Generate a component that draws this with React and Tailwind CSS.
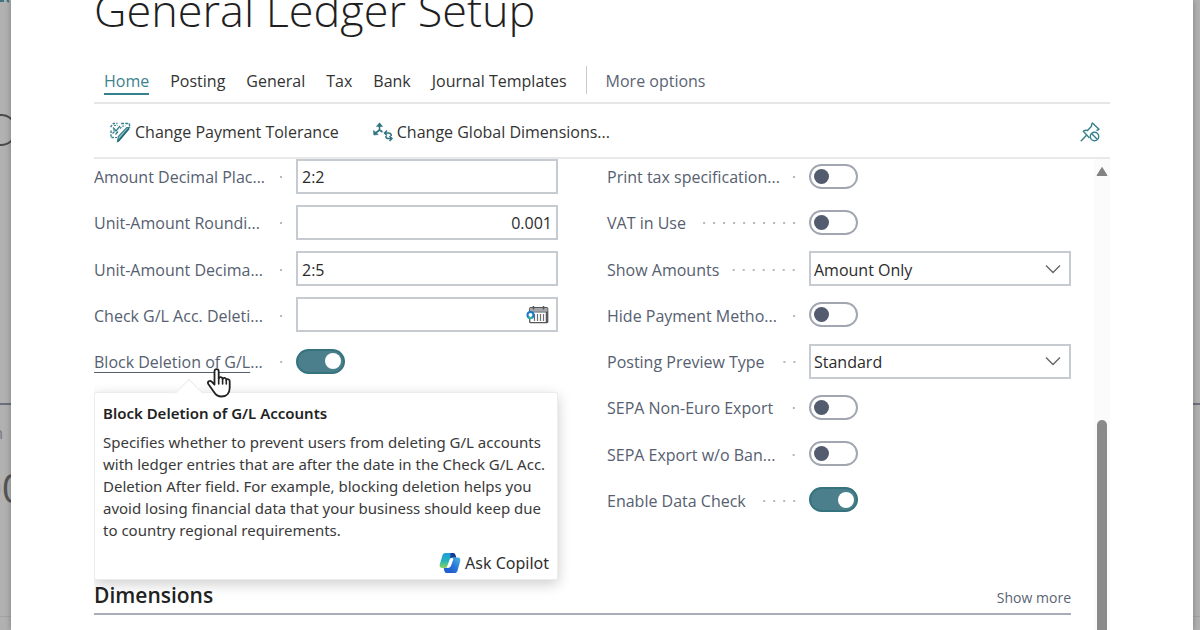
import React, { useState } from "react";

function ToleranceIcon() {
  return (
    <svg width="22" height="22" viewBox="0 0 22 22" fill="none" stroke="#35808c" strokeWidth="1.400" aria-hidden="true">
      <path d="M1.500 6l3-3.500h4M2 9.500v7h3" strokeDasharray="2.500 1.200" />
      <path d="M12 2.500h8.500v3.500" strokeDasharray="3 1.300" />
      <path d="M4 6.500l3 3.500 4-5M6.500 13.500l2.500-3M3.500 12.500l2-2" strokeWidth="1.300" />
      <path d="M5 4.500h3.500M11 7.500l3-2.500h2.500M4 9h2M8 16.500H6" strokeDasharray="2 1" strokeWidth="1.200" />
      <path d="M20.500 6.500l-8.500 10.500-3.500 3.500.8-5 8.500-9z" fill="#8fc0c6" strokeWidth="1.100" />
      <path d="M9 20.500l11-13" strokeWidth="1.800" stroke="#1f6975" />
    </svg>
  );
}

function DimensionsIcon() {
  return (
    <svg width="20" height="20" viewBox="0 0 20 20" fill="none" stroke="#2f7480" strokeWidth="1.600" aria-hidden="true">
      <path d="M6.500 8V2M6.500 8l-4.500 3.500M6.500 8l3 2" />
      <path d="M3.500 4.500l3-3.700 3 3.700z" fill="#2f7480" strokeWidth=".6" />
      <path d="M.5 8.500l.3 4.500 4.500-.5z" fill="#2f7480" strokeWidth=".6" />
      <path d="M14 8.500l-2.500 2.500 2.500 2.500M11.700 11h3.800c2.400 0 2.800 1.500 2.800 3" strokeWidth="1.500" />
      <path d="M16.500 14l2.500 2.500-2.500 2.500M18.800 16.500h-3.300c-2.200 0-2.700-1.200-2.700-2.600" strokeWidth="1.500" />
    </svg>
  );
}

function UnpinIcon() {
  return (
    <svg width="20" height="20" viewBox="0 0 20 20" fill="none" stroke="#35808c" strokeWidth="1.400" strokeLinejoin="round" aria-hidden="true">
      <path d="M.8 19.200l5.700-6" />
      <path d="M9.500 16L3.300 9.300c1.400-1.200 2.900-1.300 4.200-.8l4-4.300c-.2-1.200.1-2.300.9-3.200l6.600 6.300c-.7.700-1.500 1-2.500 1" />
      <circle cx="14.500" cy="14.500" r="4.200" />
      <path d="M11.600 11.600l5.800 5.800" />
    </svg>
  );
}

function CalendarIcon() {
  return (
    <svg width="24" height="20" viewBox="0 0 24 20" fill="none" aria-hidden="true">
      <rect x="3.700" y="2.700" width="18" height="15" rx="1" fill="#fff" stroke="#55565a" strokeWidth="1.300" />
      <rect x="4" y="3" width="17.500" height="3.500" fill="#a5a6aa" />
      <path d="M7.500 1v3.500M17.500 1v3.500" stroke="#55565a" strokeWidth="1.500" />
      <path d="M4 7h17.500" stroke="#55565a" />
      <path d="M8.500 9v7M11.500 9v7M14.500 9v7M17.500 9v7" stroke="#6d6e72" strokeWidth="1.200" />
      <path d="M20.500 7v10.500" stroke="#55565a" strokeWidth="1.500" />
      <circle cx="4.500" cy="10" r="3" fill="#fff" stroke="#1a78c8" strokeWidth="2" />
      <path d="M2.500 12.200a3 3 0 0 0 4 0" stroke="#2fb5a0" strokeWidth="2" />
    </svg>
  );
}

function CopilotIcon() {
  return (
    <svg width="22" height="22" viewBox="0 0 22 22" aria-hidden="true">
      <defs>
        <linearGradient id="copilotA" x1="0" y1="0" x2="0" y2="1">
          <stop offset="0" stopColor="#1b9de0" />
          <stop offset=".55" stopColor="#27b3b4" />
          <stop offset="1" stopColor="#8fd35a" />
        </linearGradient>
        <linearGradient id="copilotB" x1="0" y1="1" x2="1" y2="0">
          <stop offset="0" stopColor="#1b50c4" />
          <stop offset=".5" stopColor="#2a72d8" />
          <stop offset="1" stopColor="#48b9e6" />
        </linearGradient>
      </defs>
      <path d="M6.500 1h7.500c1.300 0 2 .8 2.400 2l.8 2.500h-3.700c-1.400 0-2.200.8-2.600 2L8.700 14c-.4 1.300-1.200 2-2.600 2H3.200C1 16 .2 14.300.8 12.300l2.700-9C4 1.800 5 1 6.500 1z" fill="url(#copilotA)" />
      <path d="M15.500 21H8c-1.300 0-2-.8-2.400-2l-.8-3h3.400c1.400 0 2.200-.8 2.600-2l2.400-6.500c.4-1.300 1.200-2 2.600-2h3c2.200 0 3 1.700 2.400 3.700l-2.700 9.500c-.5 1.500-1.500 2.300-3 2.300z" fill="url(#copilotB)" />
      <path d="M11.500 1H14c1.300 0 2 .8 2.400 2l.8 2.500h-3.700c-1 0-1.700.4-2.200 1.100z" fill="#173a93" />
      <path d="M4.800 16h3.400c1 0 1.700-.4 2.100-1.100L11 21H8c-1.300 0-2-.8-2.400-2z" fill="#2060d2" />
      <path d="M11 7L8 14.800c.5 1 1.600 1 2.500.6 1-.5 1.500-1.600 1.900-2.700l1.900-5.500c-.6-1-2.500-1.300-3.300-.2z" fill="#fff" />
    </svg>
  );
}

function HandCursor() {
  return (
    <svg className="pointer-events-none absolute left-[111px] top-[29px] z-20" width="28" height="32" viewBox="0 0 28 32" aria-hidden="true">
      <path
        d="M9.500 17.500V4.300c0-3 4.200-3 4.200 0v7.200c.3-2 3.800-1.900 3.900.4.700-1.600 3.600-1.300 3.700.9.900-1.200 3.400-.8 3.400 1.500v6.500c0 5-3 8.700-8.200 8.700-4.200 0-6-2-7.700-4.800L3.300 17c-1.300-2.300 1.500-4.200 3.300-2.400z"
        fill="#fff"
        stroke="#222"
        strokeWidth="1.800"
        strokeLinejoin="round"
      />
      <path d="M13.700 11v6M17.600 12v5M21.300 13v4" stroke="#222" strokeWidth="1.600" strokeLinecap="round" />
    </svg>
  );
}

function Field({ id, label, hovered, children }) {
  return (
    <div className="relative flex items-center">
      <div className="flex w-[202px] shrink-0 items-center pt-0.5">
        <label htmlFor={id} className="shrink-0 whitespace-nowrap text-[16px] leading-6 text-[#566070]">
          {hovered ? (
            <>
              <span className="underline decoration-1 underline-offset-4">{label}</span>...
            </>
          ) : (
            label
          )}
        </label>
        <span className="ml-3 mr-2.5 h-2.5 flex-1 bg-[radial-gradient(circle,#b4b9c1_1px,transparent_1.5px)] bg-[length:10px_10px] bg-right bg-repeat-x" />
      </div>
      <div className="relative flex min-w-0 flex-1 items-center">{children}</div>
    </div>
  );
}

function TextField({ id, label, value, alignRight, icon }) {
  return (
    <Field id={id} label={label}>
      <input
        id={id}
        type="text"
        defaultValue={value}
        className={`h-[35px] w-full border-2 border-[#c6cad1] bg-white px-1 pt-0.5 text-[16px] text-[#2b2b2b] outline-none ${alignRight ? "text-right" : "text-left"}`}
      />
      {icon && (
        <button type="button" aria-label="Choose date" className="absolute right-2">
          {icon}
        </button>
      )}
    </Field>
  );
}

function SelectField({ id, label, options }) {
  return (
    <Field id={id} label={label}>
      <select
        id={id}
        className="h-[35px] w-full appearance-none border-2 border-[#c6cad1] bg-white pl-[3px] pr-8 pt-0.5 text-[16px] text-[#2b2b2b] outline-none"
      >
        {options.map((option) => (
          <option key={option}>{option}</option>
        ))}
      </select>
      <svg className="pointer-events-none absolute right-2.5" width="16" height="10" viewBox="0 0 16 10" fill="none" aria-hidden="true">
        <path d="M1 1.500l7 7 7-7" stroke="#666" strokeWidth="1.400" />
      </svg>
    </Field>
  );
}

function ToggleField({ id, label, on = false, hovered, children }) {
  const [checked, setChecked] = useState(on);
  return (
    <Field id={id} label={label} hovered={hovered}>
      <input
        id={id}
        type="checkbox"
        role="switch"
        checked={checked}
        onChange={(event) => setChecked(event.target.checked)}
        className="flex h-[25px] w-[49px] appearance-none items-center rounded-full border-2 border-[#a1a6b0] bg-white px-[3px] before:block before:size-[15px] before:rounded-full before:bg-[#535b6e] checked:justify-end checked:border-[#35747f] checked:bg-[#4a7f8b] checked:px-0.5 checked:before:size-4 checked:before:bg-white"
      />
      {children}
    </Field>
  );
}

function TeachingTip() {
  return (
    <div className="absolute -left-[202px] right-0 top-[43px] z-10 rounded-xs border border-[#ececec] bg-white px-2 pb-1 pt-2 font-['Noto_Sans','Open_Sans',sans-serif] shadow-[0_4px_14px_rgba(0,0,0,0.2)]">
      <span className="absolute -top-2.5 left-[84px] size-5 rotate-45 border-l border-t border-[#ececec] bg-white" />
      <div className="relative">
        <h2 className="text-[15px] font-semibold leading-6 text-[#222]">Block Deletion of G/L Accounts</h2>
        <p className="mt-1.5 whitespace-nowrap text-[15px] leading-[22px] text-[#3a3a3a]">
          Specifies whether to prevent users from deleting G/L accounts
          <br />
          with ledger entries that are after the date in the Check G/L Acc.
          <br />
          Deletion After field. For example, blocking deletion helps you
          <br />
          avoid losing financial data that your business should keep due
          <br />
          to country regional requirements.
        </p>
        <div className="mt-2.5 flex justify-end">
          <button type="button" className="flex items-center gap-1 text-[16px] leading-6 text-[#2f2f2f]">
            <CopilotIcon />
            Ask Copilot
          </button>
        </div>
      </div>
    </div>
  );
}

function Backdrop({ children }) {
  return (
    <div className="relative overflow-hidden bg-[#b1b1b1]">
      <span className="absolute inset-x-0 top-[403px] h-0.5 bg-[#6b707c]" />
      <span className="absolute inset-x-0 top-[616px] h-px bg-[#a3a3a3]" />
      {children}
    </div>
  );
}

const tabs = ["Home", "Posting", "General", "Tax", "Bank", "Journal Templates"];

export default function App() {
  return (
    <div className="grid h-screen grid-cols-[11px_minmax(0,1fr)_7px] overflow-hidden bg-[#b1b1b1] font-['Open_Sans','Noto_Sans',sans-serif]">
      <Backdrop>
        <svg className="absolute left-0 top-0" width="11" height="150" fill="none" aria-hidden="true">
          <path d="M0 1h4M7 0l2 2" stroke="#3f7480" strokeWidth="2" />
          <circle cx="1" cy="130" r="15" stroke="#4b4b4b" strokeWidth="2" />
        </svg>
        <span className="absolute right-2 top-[421px] text-[16px] leading-6 text-[#71798a]">n</span>
        <span className="absolute -left-[21px] top-[460px] text-[40px] leading-[56px] text-[#555]">00</span>
      </Backdrop>

      <main className="z-10 flex min-h-0 flex-col bg-white px-[83px] shadow-[0_0_6px_rgba(0,0,0,0.3)]">
        <h1 className="-mt-[22px] shrink-0 text-[45px] font-light leading-[64px] text-[#1f1f1f]">General Ledger Setup</h1>

        <nav className="mt-5 flex h-[42px] shrink-0 items-center gap-[21px] border-b-2 border-[#e6e6e6] pl-2.5 text-[16px] leading-6">
          {tabs.map((tab) => (
            <a
              key={tab}
              href={`#${tab.toLowerCase().replace(" ", "-")}`}
              className={tab === "Home" ? "border-b-2 border-[#35808c] text-[#3d828d]" : "border-b-2 border-transparent text-[#333]"}
            >
              {tab}
            </a>
          ))}
          <span className="-mx-0.5 -mt-1 h-7 w-px bg-[#c9ccd3]" />
          <a href="#more" className="border-b-2 border-transparent text-[#5b6474]">
            More options
          </a>
        </nav>

        <div className="flex h-[55px] shrink-0 items-center border-b-2 border-[#e9e9e9] pl-[15px] pr-2.5 pt-0.5 text-[16px] leading-6 text-[#333]">
          <button type="button" className="flex items-center gap-1">
            <ToleranceIcon />
            Change Payment Tolerance
          </button>
          <button type="button" className="ml-[34px] flex items-center gap-1">
            <DimensionsIcon />
            Change Global Dimensions...
          </button>
          <button type="button" aria-label="Unpin" className="ml-auto">
            <UnpinIcon />
          </button>
        </div>

        <div className="flex min-h-0 flex-1 overflow-hidden">
          <div className="-mt-1.5 min-w-0 flex-1">
            <form className="grid grid-cols-2 gap-x-[49px]">
              <div className="grid h-[370px] grid-rows-8">
                <TextField id="amount-decimal" label="Amount Decimal Plac..." value="2:2" />
                <TextField id="unit-rounding" label="Unit-Amount Roundi..." value="0.001" alignRight />
                <TextField id="unit-decimal" label="Unit-Amount Decima..." value="2:5" />
                <TextField id="check-deletion" label="Check G/L Acc. Deleti..." value="" icon={<CalendarIcon />} />
                <div className="relative grid">
                  <ToggleField id="block-deletion" label="Block Deletion of G/L" on hovered>
                    <TeachingTip />
                  </ToggleField>
                  <HandCursor />
                </div>
              </div>
              <div className="grid h-[370px] grid-rows-8">
                <ToggleField id="print-tax" label="Print tax specification..." />
                <ToggleField id="vat" label="VAT in Use" />
                <SelectField id="show-amounts" label="Show Amounts" options={["Amount Only", "Debit/Credit Only", "All Amounts"]} />
                <ToggleField id="hide-payment" label="Hide Payment Metho..." />
                <SelectField id="preview-type" label="Posting Preview Type" options={["Standard", "Extended"]} />
                <ToggleField id="sepa-non-euro" label="SEPA Non-Euro Export" />
                <ToggleField id="sepa-export" label="SEPA Export w/o Ban..." />
                <ToggleField id="data-check" label="Enable Data Check" on />
              </div>
            </form>

            <section className="mt-14 flex items-end justify-between border-b-2 border-[#a9adba]">
              <h2 className="pb-0.5 text-[21px] font-semibold leading-8 text-[#222]">Dimensions</h2>
              <button type="button" className="pb-[3px] text-[14px] leading-6 text-[#5b6474]">
                Show more
              </button>
            </section>
          </div>

          <div className="ml-[23px] flex w-4 flex-col items-center bg-[#fbfbfb] pt-2" aria-hidden="true">
            <svg width="12" height="9" viewBox="0 0 12 9">
              <path d="M6 .5L11 8.500H1z" fill="#828282" stroke="#828282" strokeLinejoin="round" />
            </svg>
            <span className="mt-[244px] w-2.5 flex-1 rounded-t-full bg-[#8a8a8a]" />
          </div>
        </div>
      </main>

      <Backdrop />
    </div>
  );
}
